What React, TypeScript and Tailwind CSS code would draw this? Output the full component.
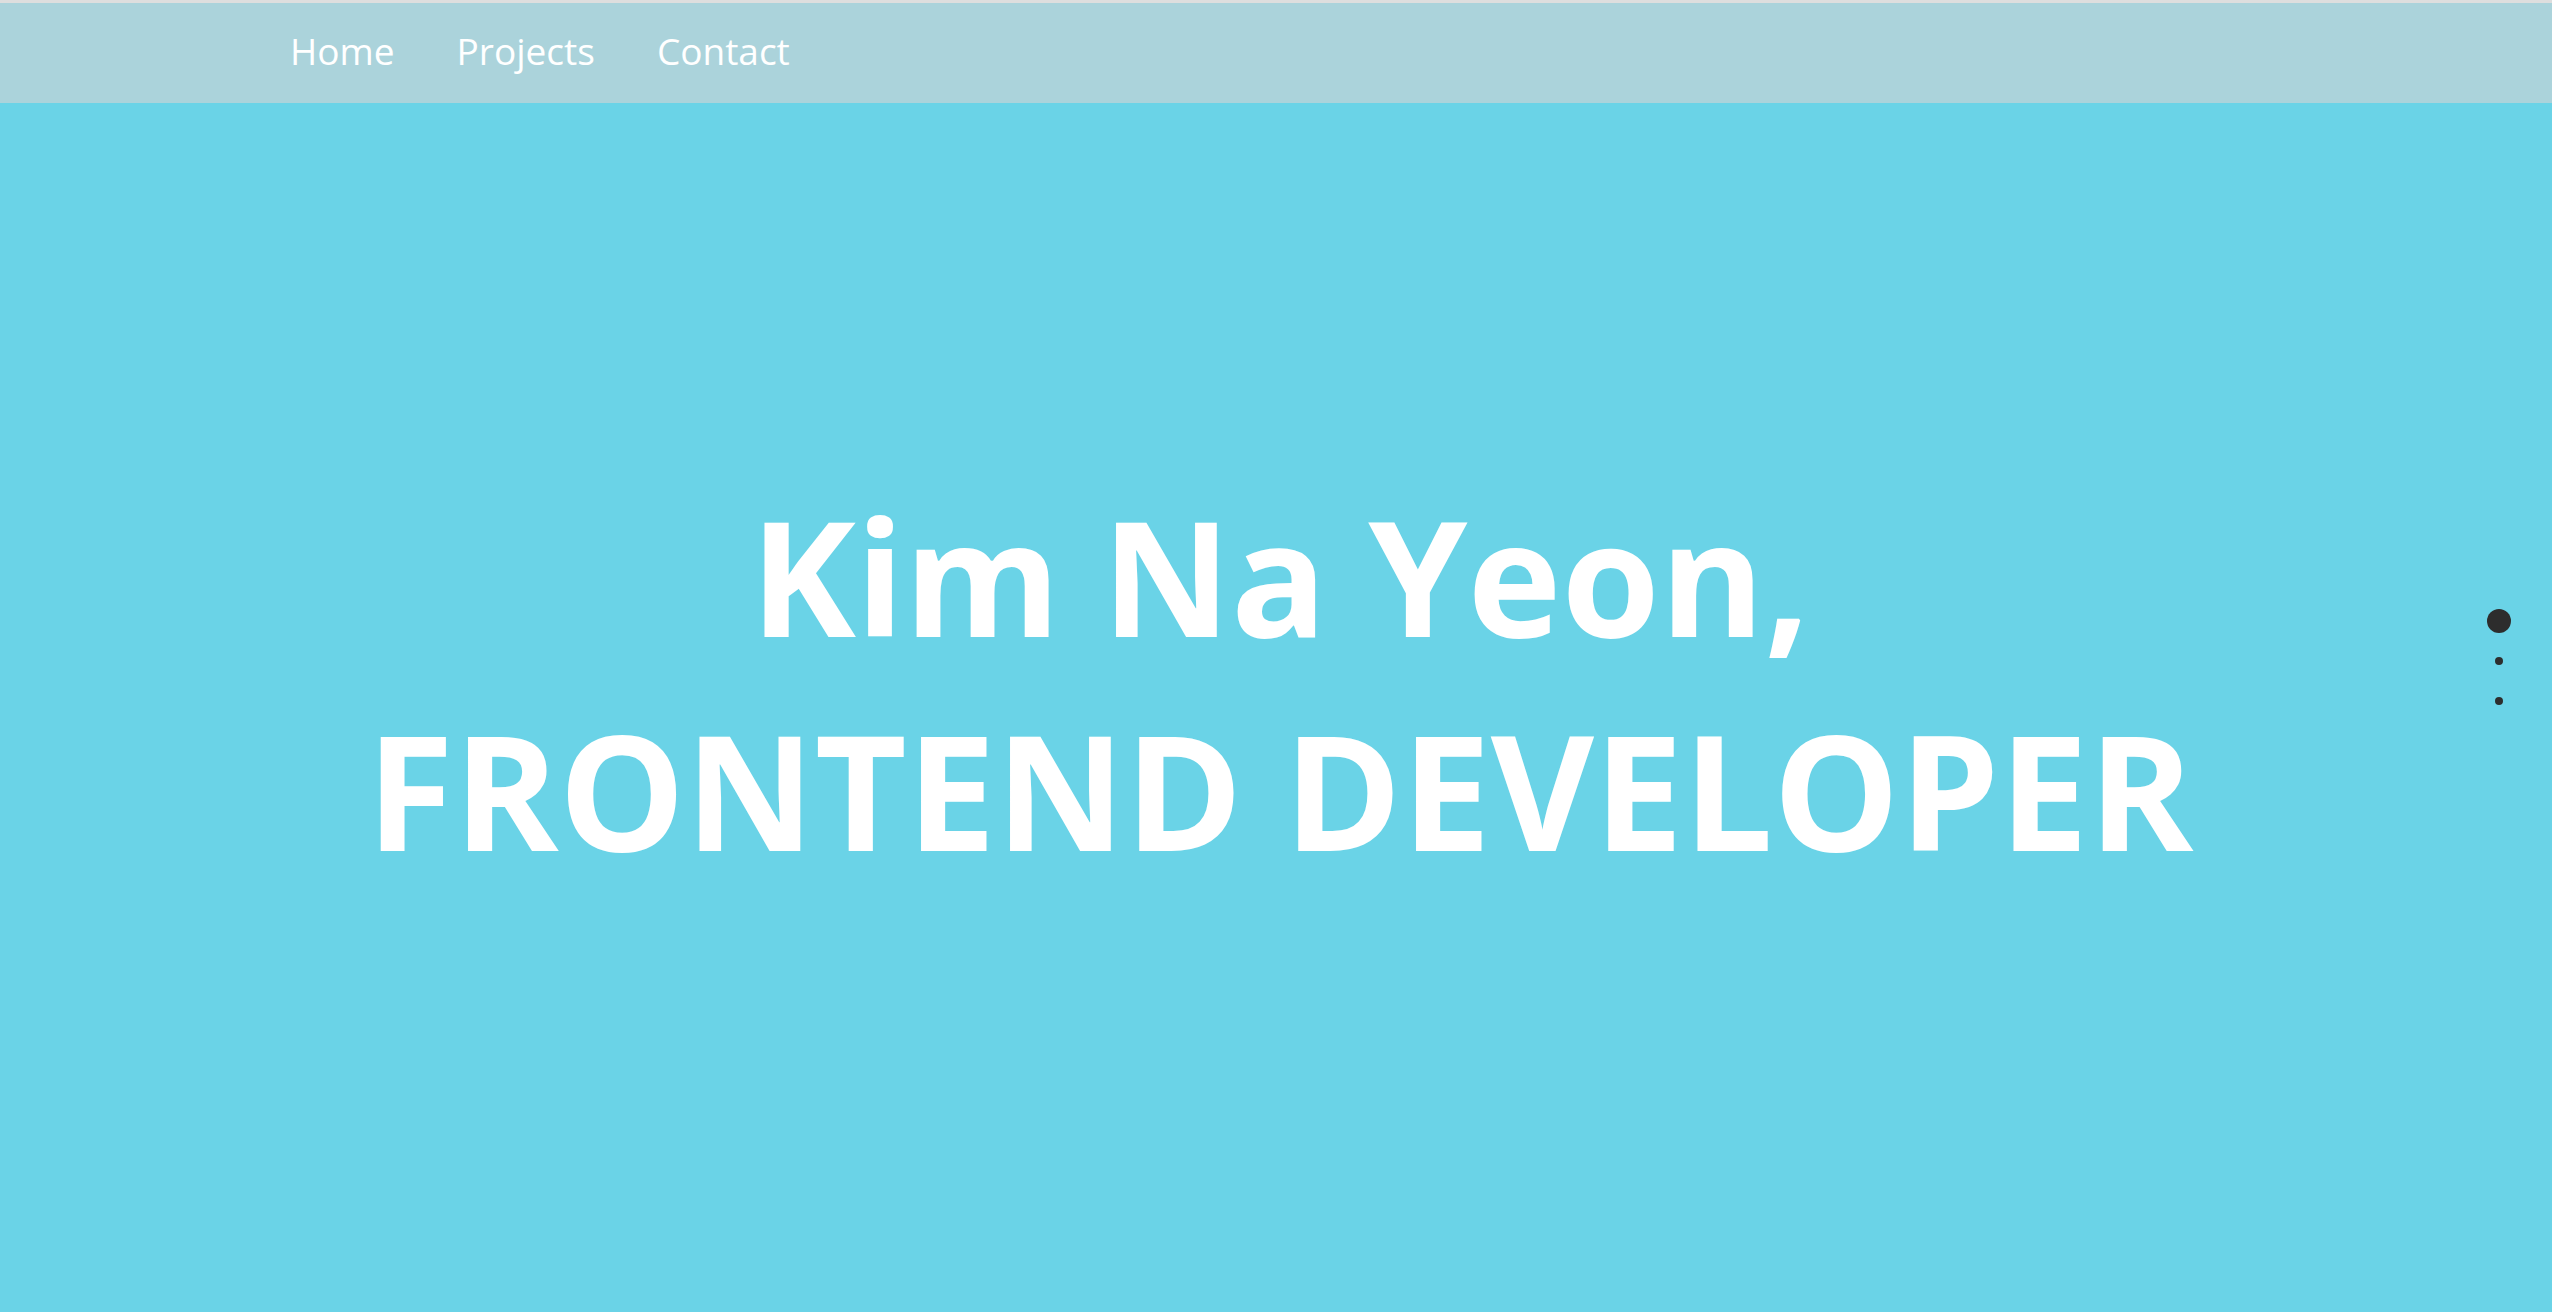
import React from "react";

export default function App() {
  return (
    <div className="relative w-full h-[1312px] overflow-hidden bg-[#6ad3e7]" style={{ fontFamily: '"Open Sans", "Noto Sans", sans-serif' }}>
      <div className="h-[3px] bg-[#dedede]" />
      <nav className="h-[100px] bg-[#abd3db] flex items-center pl-[290px] pb-[6px] gap-[62px] text-white text-[37px] font-normal">
        <a className="leading-none">Home</a>
        <a className="leading-none">Projects</a>
        <a className="leading-none">Contact</a>
      </nav>
      <main className="flex flex-col items-center pt-[366px] pl-[8px]">
        <h1 className="text-white font-bold text-[159px] leading-[214px] text-center">
          <div>Kim Na Yeon,</div>
          <div>FRONTEND DEVELOPER</div>
        </h1>
      </main>
      <div className="absolute right-[41px] top-[609px] flex flex-col items-center w-[24px]">
        <span className="w-[24px] h-[24px] rounded-full bg-[#2d2d2d]" />
        <span className="mt-[24px] w-[8px] h-[8px] rounded-full bg-[#2d2d2d]" />
        <span className="mt-[32px] w-[8px] h-[8px] rounded-full bg-[#2d2d2d]" />
      </div>
    </div>
  );
}
